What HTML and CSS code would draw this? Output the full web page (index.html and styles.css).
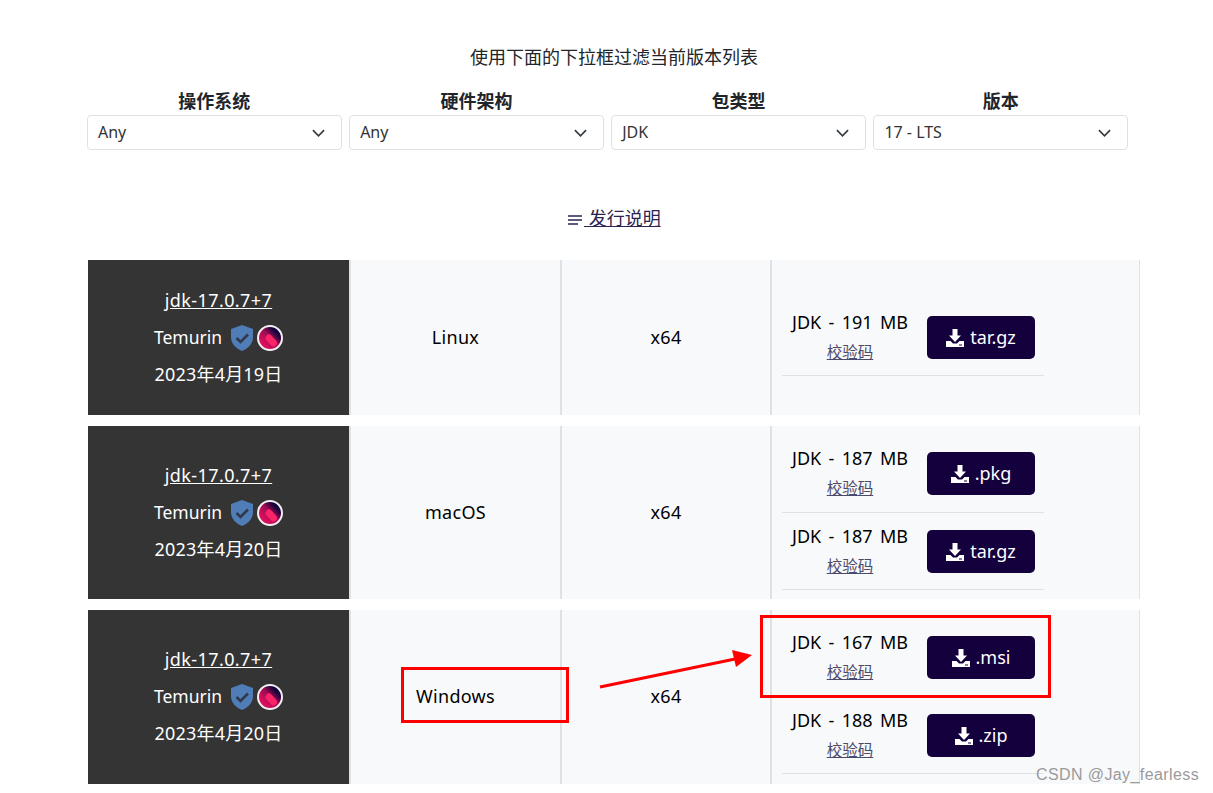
FILE: index.html
```html
<!DOCTYPE html>
<html lang="zh-CN">
<head>
    <meta charset="UTF-8">
    <title>Temurin 下载</title>
    <link rel="stylesheet" href="styles.css">
</head>
<body>
    <svg class="sprites" width="0" height="0">
        <symbol id="shield" viewBox="0 0 22 26">
            <path d="M11 0 L22 4 V12 C22 19 17 23.500 11 26 C5 23.500 0 19 0 12 V4 Z" fill="#4f7db8"/>
            <path d="M5.500 13 L9.500 17 L17 9.500" fill="none" stroke="#33384a" stroke-width="2.600"/>
        </symbol>
        <symbol id="seal" viewBox="0 0 26 26">
            <defs>
                <linearGradient id="sealFill" x1="0.100" y1="0.900" x2="0.900" y2="0.100">
                    <stop offset="0.200" stop-color="#d80f5c"/>
                    <stop offset="0.550" stop-color="#9a0c50"/>
                    <stop offset="0.800" stop-color="#14003c"/>
                </linearGradient>
            </defs>
            <circle cx="13" cy="13" r="12" fill="url(#sealFill)" stroke="#f4eef2" stroke-width="2"/>
            <path d="M12 13 L16.500 18" stroke="#fa2468" stroke-width="7" stroke-linecap="round"/>
        </symbol>
        <symbol id="download" viewBox="0 0 18 18">
            <path d="M6.500 0 H11.500 V6.500 H15 L9 13 L3 6.500 H6.500 Z" fill="#fff"/>
            <path d="M0 12 H4.500 L7 14.500 H11 L13.500 12 H18 V18 H0 Z" fill="#fff"/>
            <rect x="13" y="15.500" width="3" height="1" fill="#14003c"/>
        </symbol>
        <symbol id="notes" viewBox="0 0 14 10">
            <path d="M0 1 H14 M0 5 H14 M0 9 H10" stroke="#2c2450" stroke-width="1.500"/>
        </symbol>
    </svg>

    <div class="page">
        <p class="intro">使用下面的下拉框过滤当前版本列表</p>

        <div class="filters">
            <div class="filter">
                <label>操作系统</label>
                <div class="select"><span>Any</span><svg class="chevron" viewBox="0 0 14 8"><path d="M1 1 L7 7 L13 1"/></svg></div>
            </div>
            <div class="filter">
                <label>硬件架构</label>
                <div class="select"><span>Any</span><svg class="chevron" viewBox="0 0 14 8"><path d="M1 1 L7 7 L13 1"/></svg></div>
            </div>
            <div class="filter">
                <label>包类型</label>
                <div class="select"><span>JDK</span><svg class="chevron" viewBox="0 0 14 8"><path d="M1 1 L7 7 L13 1"/></svg></div>
            </div>
            <div class="filter">
                <label>版本</label>
                <div class="select"><span>17 - LTS</span><svg class="chevron" viewBox="0 0 14 8"><path d="M1 1 L7 7 L13 1"/></svg></div>
            </div>
        </div>

        <div class="notes-link">
            <svg class="notes-icon"><use href="#notes"/></svg><a href="#">&nbsp;发行说明</a>
        </div>

        <div class="release release-single">
            <div class="cell-dark">
                <a href="#">jdk-17.0.7+7</a>
                <div class="vendor">Temurin <svg class="shield"><use href="#shield"/></svg><svg class="seal"><use href="#seal"/></svg></div>
                <div class="date">2023年4月19日</div>
            </div>
            <div class="cell">Linux</div>
            <div class="cell">x64</div>
            <div class="cell cell-files">
                <div class="file">
                    <div class="file-info">JDK - 191 MB<a href="#">校验码</a></div>
                    <a class="btn" href="#"><svg class="dl"><use href="#download"/></svg>tar.gz</a>
                </div>
            </div>
        </div>

        <div class="release">
            <div class="cell-dark">
                <a href="#">jdk-17.0.7+7</a>
                <div class="vendor">Temurin <svg class="shield"><use href="#shield"/></svg><svg class="seal"><use href="#seal"/></svg></div>
                <div class="date">2023年4月20日</div>
            </div>
            <div class="cell">macOS</div>
            <div class="cell">x64</div>
            <div class="cell cell-files">
                <div class="file">
                    <div class="file-info">JDK - 187 MB<a href="#">校验码</a></div>
                    <a class="btn" href="#"><svg class="dl"><use href="#download"/></svg>.pkg</a>
                </div>
                <div class="file">
                    <div class="file-info">JDK - 187 MB<a href="#">校验码</a></div>
                    <a class="btn" href="#"><svg class="dl"><use href="#download"/></svg>tar.gz</a>
                </div>
            </div>
        </div>

        <div class="release release-last">
            <div class="cell-dark">
                <a href="#">jdk-17.0.7+7</a>
                <div class="vendor">Temurin <svg class="shield"><use href="#shield"/></svg><svg class="seal"><use href="#seal"/></svg></div>
                <div class="date">2023年4月20日</div>
            </div>
            <div class="cell">Windows</div>
            <div class="cell">x64</div>
            <div class="cell cell-files">
                <div class="file">
                    <div class="file-info">JDK - 167 MB<a href="#">校验码</a></div>
                    <a class="btn" href="#"><svg class="dl"><use href="#download"/></svg>.msi</a>
                </div>
                <div class="file">
                    <div class="file-info">JDK - 188 MB<a href="#">校验码</a></div>
                    <a class="btn" href="#"><svg class="dl"><use href="#download"/></svg>.zip</a>
                </div>
            </div>
        </div>
    </div>

    <!-- annotations drawn over the screenshot -->
    <div class="mark mark-os"></div>
    <div class="mark mark-file"></div>
    <svg class="arrow" width="170" height="50" viewBox="0 0 170 50">
        <path d="M5 40 L140 12" stroke="#f00" stroke-width="3"/>
        <path d="M137 3 L157 8 L141 20 Z" fill="#f00"/>
    </svg>
    <div class="watermark">CSDN @Jay_fearless</div>
</body>
</html>
```

FILE: styles.css
```css
html, body {
    margin: 0;
    padding: 0;
}
body {
    position: relative;
    height: 793px;
    overflow: hidden;
    background-color: #ffffff;
    color: #212529;
    font-family: "Noto Sans", "Noto Sans CJK SC", sans-serif;
    font-size: 18px;
}
a {
    color: inherit;
}
.sprites {
    position: absolute;
}
.page {
    width: 1052px;
    margin-left: 88px;
}
.intro {
    margin: 0;
    padding-top: 45px;
    height: 44px;
    line-height: 24px;
    text-align: center;
    width: 1052px;
    box-sizing: content-box;
}
.filters {
    display: flex;
    gap: 7.500px;
    width: 1041px;
    margin-left: -1px;
}
.filter {
    flex: 1;
    text-align: center;
}
.filter label {
    display: block;
    height: 26px;
    line-height: 25px;
    font-weight: bold;
    font-size: 18px;
}
.select {
    display: flex;
    justify-content: space-between;
    align-items: center;
    height: 35px;
    padding: 0 16px 0 10px;
    border: 1px solid #dee2e6;
    border-radius: 4px;
    box-sizing: border-box;
    font-size: 16px;
    line-height: 32px;
    color: #333;
}
.select span {
    position: relative;
    top: -1px;
}
.chevron {
    width: 13px;
    height: 8px;
    fill: none;
    stroke: #343a40;
    stroke-width: 1.800;
}
.notes-link {
    height: 110px;
    padding-top: 56px;
    box-sizing: border-box;
    padding-left: 480px;
    line-height: 24px;
    color: #2c2450;
}
.notes-icon {
    width: 14px;
    height: 10px;
    margin-right: 2px;
}
.release {
    display: grid;
    grid-template-columns: 261px 211px 210px 370px;
    height: 173px;
    margin-bottom: 11px;
    background-color: #f8f9fa;
    border-right: 1px solid #dee2e6;
    box-sizing: border-box;
    color: #000;
}
.release-single {
    height: 155px;
}
.release-last {
    height: 174px;
}
.cell-dark {
    display: flex;
    flex-direction: column;
    justify-content: center;
    align-items: center;
    gap: 9px;
    padding-bottom: 2px;
    background-color: #343434;
    color: #ffffff;
    line-height: 28px;
}
.cell-dark > a {
    letter-spacing: 0.4px;
}
.date {
    letter-spacing: 0.2px;
}
.vendor {
    display: flex;
    align-items: center;
    height: 28px;
    font-size: 17.500px;
}
.shield {
    width: 22px;
    height: 26px;
    margin-left: 9px;
    margin-top: 2px;
}
.seal {
    width: 26px;
    height: 26px;
    margin-left: 4px;
    margin-top: 2px;
}
.cell {
    display: flex;
    justify-content: center;
    align-items: center;
    padding-bottom: 2px;
    border-left: 2px solid #dee2e6;
    letter-spacing: 0.3px;
}
.cell-files {
    flex-direction: column;
    justify-content: center;
    align-items: flex-start;
    padding: 0 0 0 10px;
    letter-spacing: 0;
}
.release-last .cell-files {
    justify-content: flex-start;
    padding-top: 9px;
}
.file {
    display: flex;
    align-items: flex-start;
    width: 262px;
    height: 78px;
    padding-top: 11px;
    box-sizing: border-box;
    border-bottom: 1px solid #dee2e6;
}
.file:last-child {
    height: 77px;
}
.file-info {
    display: flex;
    flex-direction: column;
    align-items: center;
    gap: 6px;
    width: 136px;
    margin-right: 9px;
    line-height: 24px;
    font-size: 18px;
    word-spacing: 2.700px;
}
.file-info a {
    font-size: 15.500px;
    line-height: 24px;
    color: #4a4a6a;
}
.btn {
    display: flex;
    justify-content: center;
    align-items: center;
    gap: 6px;
    width: 108px;
    height: 43px;
    margin-top: 6px;
    padding-bottom: 2px;
    box-sizing: border-box;
    border-radius: 5px;
    background-color: #14003c;
    color: #ffffff;
    text-decoration: none;
    font-size: 18px;
}
.dl {
    width: 18px;
    height: 18px;
    margin-top: 2px;
}
.mark {
    position: absolute;
    border: 3px solid #f00;
    box-sizing: border-box;
}
.mark-os {
    left: 401px;
    top: 667px;
    width: 168px;
    height: 56px;
}
.mark-file {
    left: 760px;
    top: 615px;
    width: 291px;
    height: 83px;
}
.arrow {
    position: absolute;
    left: 595px;
    top: 647px;
}
.watermark {
    position: absolute;
    left: 1036px;
    top: 764px;
    color: #9a9a9a;
    font-size: 16px;
    line-height: 22px;
    font-family: "Liberation Sans", sans-serif;
    letter-spacing: 0.4px;
}
```
